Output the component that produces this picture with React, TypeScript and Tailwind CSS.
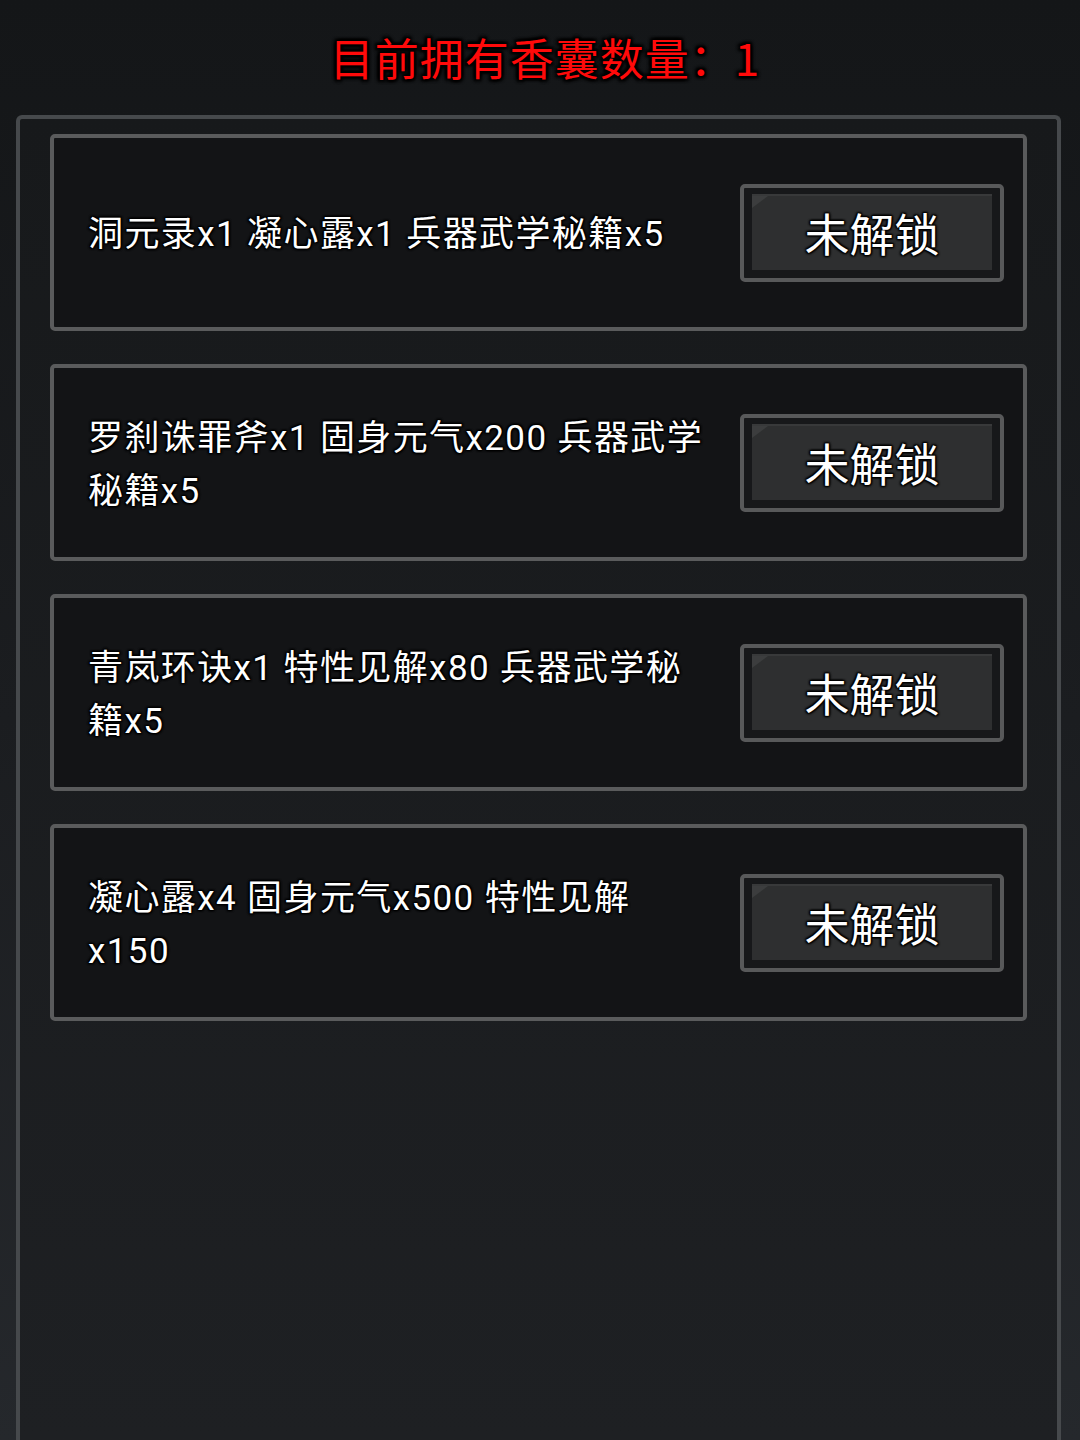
import React from "react";

const FONT = "font-['Roboto','Noto_Sans_CJK_SC',sans-serif]";
const GLOW =
  "[text-shadow:0_0_2px_#000,0_0_3px_#000,1px_1px_2px_#000,-1px_-1px_2px_#000,1px_-1px_2px_#000,-1px_1px_2px_#000]";

const rewards: string[][] = [
  ["洞元录x1 凝心露x1 兵器武学秘籍x5"],
  ["罗刹诛罪斧x1 固身元气x200 兵器武学", "秘籍x5"],
  ["青岚环诀x1 特性见解x80 兵器武学秘", "籍x5"],
  ["凝心露x4 固身元气x500 特性见解", "x150"],
];

function LockedButton() {
  return (
    <div className="h-[98px] w-[264px] shrink-0 rounded-[5px] border-4 border-[#58595a] bg-[#17181a] px-[8px] pb-[8px] pt-[6px]">
      <div className="relative flex h-full w-full items-center justify-center overflow-hidden border-t-2 border-[#38393a] bg-[#2e2f30]">
        <div className="absolute left-0 top-0 h-0 w-0 border-r-[16px] border-t-[12px] border-r-transparent border-t-[#3c3d3e]" />
        <span
          className={`font-['Noto_Sans_CJK_SC',sans-serif] ${GLOW} text-[45px] leading-none text-white`}
        >
          未解锁
        </span>
      </div>
    </div>
  );
}

function RewardCard({ lines }: { lines: string[] }) {
  return (
    <div className="flex h-[197px] items-center justify-between rounded-[5px] border-4 border-[#5a5b5c] bg-[#131416] pl-[34px] pr-[19px]">
      <div
        className={`${FONT} ${GLOW} w-[640px] pt-[4px] text-[35px] leading-[53px] tracking-[1.4px] text-white`}
      >
        {lines.map((l, i) => (
          <div key={i} className="whitespace-nowrap">
            {l}
          </div>
        ))}
      </div>
      <LockedButton />
    </div>
  );
}

export default function App() {
  return (
    <div className="flex h-[1440px] w-[1080px] flex-col overflow-hidden bg-gradient-to-b from-[#141618] via-[#1b1d20] to-[#25282c]">
      <div className="flex h-[115px] shrink-0 items-center justify-center pb-[2px] pl-[10px]">
        <h1
          className={`font-['Noto_Sans_CJK_SC',sans-serif] text-[44px] font-normal leading-none tracking-[1px] text-[#ff0a0a] [text-shadow:0_0_3px_#000,0_0_4px_#000,2px_2px_3px_#000,-2px_-2px_3px_#000,2px_-2px_3px_#000,-2px_2px_3px_#000]`}
        >
          目前拥有香囊数量：1
        </h1>
      </div>
      <div className="ml-[16px] mr-[19px] flex-1 rounded-t-[6px] border-x-4 border-t-4 border-[#46494c] bg-gradient-to-b from-[#17191b] to-[#1e2023] px-[30px] pt-[15px]">
        <div className="flex flex-col gap-[33px]">
          {rewards.map((lines, i) => (
            <RewardCard key={i} lines={lines} />
          ))}
        </div>
      </div>
    </div>
  );
}
